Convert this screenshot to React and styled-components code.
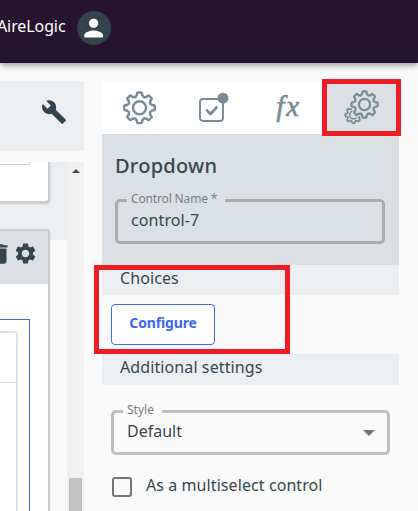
import React from 'react';
import styled, { createGlobalStyle } from 'styled-components';

const GlobalStyle = createGlobalStyle`
  * { box-sizing: border-box; }
  body { margin: 0; overflow: hidden; background: #fafafa; }
  svg { flex: none; display: block; }
`;

const Page = styled.div`
  position: relative;
  display: flex;
  flex-direction: column;
  width: 418px;
  height: 511px;
  overflow: hidden;
  background: #fafafa;
  color: #37474f;
  font-family: 'Noto Sans', sans-serif;
`;

const Label = styled.span`
  display: block;
  white-space: nowrap;
  font-size: ${(p) => p.$size || 16}px;
  line-height: ${(p) => p.$line || 20}px;
  letter-spacing: ${(p) => p.$track || 0}px;
  font-weight: ${(p) => p.$weight || 400};
  color: ${(p) => p.$color || 'inherit'};
`;

const Header = styled.header`
  flex: none;
  display: flex;
  align-items: flex-start;
  height: 63px;
  background: #26142e;
  box-shadow: 0 2px 4px -1px rgba(0, 0, 0, 0.2), 0 4px 5px rgba(0, 0, 0, 0.14), 0 1px 10px rgba(0, 0, 0, 0.12);
  z-index: 1;
`;

const UserName = styled.div`
  width: 77px;
  padding: 16px 0 0;
  margin-left: -3px;
`;

const Avatar = styled.div`
  width: 34px;
  height: 34px;
  margin: 11px 0 0 3px;
  border-radius: 50%;
  background: #33444f;
`;

const Body = styled.main`
  flex: 1;
  display: flex;
  gap: 18px;
  padding-top: 18px;
  min-height: 0;
`;

const Canvas = styled.section`
  flex: none;
  display: flex;
  flex-direction: column;
  gap: 11px;
  width: 84px;
`;

const Toolbar = styled.div`
  flex: none;
  display: flex;
  justify-content: flex-end;
  height: 70px;
  padding: 18px 17px 0 0;
  background: #ebeff2;
`;

const ScrollArea = styled.div`
  flex: 1;
  display: flex;
  min-height: 0;
`;

const Cards = styled.div`
  width: 67px;
  overflow: hidden;
  background: linear-gradient(#ebeff2 78px, #fafafa 78px);
`;

const Card = styled.div`
  width: 50px;
  border: 2px solid #cacccd;
  border-left: 0;
  box-shadow: 0 1px 2px rgba(0, 0, 0, 0.15);
  background: #fff;
`;

const UpperCard = styled(Card)`
  height: 41px;
  border-top: 0;
  border-radius: 0 0 4px 0;
`;

const UpperInner = styled.div`
  width: 30px;
  height: 3px;
  border: solid #cfd0d1;
  border-width: 0 1px 1px 0;
`;

const LowerCard = styled(Card)`
  height: 300px;
  margin-top: 26px;
  border-radius: 0 4px 0 0;
`;

const CardHeader = styled.div`
  display: flex;
  align-items: flex-start;
  justify-content: flex-end;
  gap: 0;
  height: 53px;
  padding: 10px 10px 0 0;
  background: #dbe0e4;
`;

const Selection = styled.div`
  width: 30px;
  height: 260px;
  margin-top: 35px;
  padding-top: 11px;
  border: solid #3f66ef;
  border-width: 1px 1px 0 0;
`;

const SelectionInner = styled.div`
  width: 18px;
  height: 240px;
  border: 2px solid #dce1e4;
  border-left: 0;
  border-radius: 0 4px 0 0;
`;

const InnerRow = styled.div`
  height: 50px;
  border-bottom: 1px solid #dadddf;
`;

const Scrollbar = styled.div`
  display: flex;
  flex-direction: column;
  justify-content: space-between;
  align-items: center;
  width: 17px;
  padding-top: 7px;
  background: #f1f1f1;
`;

const ScrollUp = styled.div`
  border: solid transparent;
  border-width: 0 4px 4px;
  border-bottom-color: #4c4c4c;
`;

const Thumb = styled.div`
  width: 13px;
  height: 33px;
  background: #c1c1c1;
`;

const Inspector = styled.section`
  flex: none;
  width: 297px;
`;

const Tabs = styled.nav`
  display: grid;
  grid-template-columns: repeat(4, 1fr);
  height: 53px;
  background: #fff;
  color: #788b96;
`;

const Tab = styled.div`
  display: flex;
  align-items: center;
  justify-content: center;
  background: ${(p) => (p.$active ? '#dbe0e4' : '#fff')};
`;

const Formula = styled.span`
  font: italic 29px/32px 'Liberation Serif', serif;
  letter-spacing: 2px;
  -webkit-text-stroke: 0.6px #788b96;
  margin: -3px 0 0 2px;
`;

const Summary = styled.div`
  height: 131px;
  padding: 20px 14px 0 13px;
  background: #dbe0e4;
`;

const SectionTitle = styled.div`
  height: ${(p) => p.$height}px;
  padding: 3px 0 0 18px;
  background: #ebeff2;
`;

const Field = styled.fieldset`
  display: flex;
  justify-content: space-between;
  height: 53px;
  min-width: 0;
  margin: ${(p) => p.$margin};
  padding: 1px 13px 0;
  border: 3px solid ${(p) => p.$line};
  border-radius: 5px;
`;

const Legend = styled.legend`
  width: ${(p) => p.$width}px;
  height: 18px;
  padding: 0 0 0 4px;
  margin-left: -4px;
`;

const ButtonRow = styled.div`
  height: 59px;
  padding: 9px;
`;

const ConfigureButton = styled.button`
  display: flex;
  justify-content: center;
  width: 104px;
  height: 41px;
  padding: 8px 0 0;
  border: 1px solid #3f66f5;
  border-radius: 4px;
  background: #fff;
  color: #3f66f5;
  font-family: inherit;
`;

const Caret = styled.div`
  height: 0;
  margin: 9px -1px 0 0;
  border: solid transparent;
  border-width: 6px 6px 0;
  border-top-color: #747474;
`;

const CheckRow = styled.label`
  display: flex;
  gap: 14px;
  padding: 20px 0 0 10px;
`;

const Checkbox = styled.span`
  width: 20px;
  height: 20px;
  margin-top: 2px;
  border: 2px solid #757575;
  border-radius: 3px;
`;

const Highlight = styled.div`
  position: absolute;
  z-index: 2;
  left: ${(p) => p.$x}px;
  top: ${(p) => p.$y}px;
  width: ${(p) => p.$w}px;
  height: ${(p) => p.$h}px;
  border: 5px solid #ee1c24;
`;

// Closed outline of an eight-toothed cog with rounded teeth and valleys.
function cogPath(cx, cy, radius) {
  const pt = (deg, r) => {
    const a = (deg * Math.PI) / 180;
    return `${(cx + Math.cos(a) * r * radius).toFixed(2)} ${(cy + Math.sin(a) * r * radius).toFixed(2)}`;
  };
  let d = `M${pt(-6, 1)}`;
  for (let i = 0; i < 8; i += 1) {
    const a = i * 45;
    d += `L${pt(a + 6, 1)}Q${pt(a + 10, 1)} ${pt(a + 10.5, 0.92)}`;
    d += `Q${pt(a + 11, 0.8)} ${pt(a + 15, 0.82)}`;
    d += `Q${pt(a + 22.5, 0.66)} ${pt(a + 30, 0.82)}`;
    d += `Q${pt(a + 34, 0.8)} ${pt(a + 34.5, 0.92)}Q${pt(a + 35, 1)} ${pt(a + 39, 1)}`;
  }
  return `${d}Z`;
}

const stroke = { fill: 'none', stroke: 'currentColor', strokeWidth: 2.4, strokeLinejoin: 'round', strokeLinecap: 'round' };

const CogIcon = () => (
  <svg width="34" height="34" viewBox="0 0 34 34" {...stroke}>
    <path d={cogPath(17.5, 16.8, 15.4)} />
    <circle cx="17.5" cy="16.8" r="6.5" />
  </svg>
);

const ValidationIcon = () => (
  <svg width="32" height="32" viewBox="0 0 32 32" {...stroke} strokeWidth="1.9">
    <rect x="3" y="7" width="23" height="22" rx="3" />
    <path d="M10 18.5l3.5 3.5 6-6.5" strokeWidth="2.7" />
    <circle cx="26" cy="6.2" r="5.5" fill="currentColor" stroke="none" />
  </svg>
);

const CogsIcon = () => (
  <svg width="36" height="36" viewBox="0 0 36 36" {...stroke}>
    <path d={cogPath(9.5, 25, 8.3)} strokeWidth="1.6" />
    <circle cx="9.5" cy="25" r="3.9" strokeWidth="1.6" />
    <path d={cogPath(20.5, 14.5, 15)} fill="#dbe0e4" stroke="#dbe0e4" />
    <path d={cogPath(20.5, 14.5, 13.2)} strokeWidth="2.2" />
    <circle cx="20.5" cy="14.5" r="5.6" strokeWidth="2.2" />
  </svg>
);

const MaterialIcon = ({ size, color, d }) => (
  <svg width={size} height={size} viewBox="0 0 24 24" fill={color}>
    <path d={d} />
  </svg>
);

const WRENCH = 'M22.7 19l-9.1-9.1c.9-2.3.4-5-1.5-6.9-2-2-5-2.4-7.4-1.3L9 6 6 9 1.6 4.7C.4 7.1.9 10.1 2.9 12.1c1.9 1.9 4.6 2.4 6.9 1.5l9.1 9.1c.4.4 1 .4 1.4 0l2.3-2.3c.5-.4.5-1.1.1-1.4z';
const PERSON = 'M12 12c2.21 0 4-1.79 4-4s-1.79-4-4-4-4 1.79-4 4 1.79 4 4 4zm0 2c-2.67 0-8 1.34-8 4v2h16v-2c0-2.66-5.33-4-8-4z';
const TRASH = 'M6 19c0 1.1.9 2 2 2h8c1.1 0 2-.9 2-2V7H6v12zM19 4h-3.5l-1-1h-5l-1 1H5v2h14V4z';
const SETTINGS = 'M19.14 12.94c.04-.3.06-.61.06-.94 0-.32-.02-.64-.07-.94l2.03-1.58c.18-.14.23-.41.12-.61l-1.92-3.32c-.12-.22-.37-.29-.59-.22l-2.39.96c-.5-.38-1.03-.7-1.62-.94l-.36-2.54c-.04-.24-.24-.41-.48-.41h-3.84c-.24 0-.43.17-.47.41l-.36 2.54c-.59.24-1.13.57-1.62.94l-2.39-.96c-.22-.08-.47 0-.59.22L2.74 8.87c-.12.21-.08.47.12.61l2.03 1.58c-.05.3-.09.63-.09.94s.02.64.07.94l-2.03 1.58c-.18.14-.23.41-.12.61l1.92 3.32c.12.22.37.29.59.22l2.39-.96c.5.38 1.03.7 1.62.94l.36 2.54c.05.24.24.41.48.41h3.84c.24 0 .44-.17.47-.41l.36-2.54c.59-.24 1.13-.56 1.62-.94l2.39.96c.22.08.47 0 .59-.22l1.92-3.32c.12-.22.07-.47-.12-.61l-2.01-1.58zM12 15.6c-1.98 0-3.6-1.62-3.6-3.6s1.62-3.6 3.6-3.6 3.6 1.62 3.6 3.6-1.62 3.6-3.6 3.6z';

const AvatarIcon = () => (
  <svg width="34" height="34" viewBox="0 0 34 34" fill="#fff">
    <path d={PERSON} transform="translate(2.6 3) scale(1.17)" />
  </svg>
);

export default function App() {
  return (
    <Page>
      <GlobalStyle />
      <Header>
        <UserName><Label $color="#fff" $track={-0.1}>AireLogic</Label></UserName>
        <Avatar><AvatarIcon /></Avatar>
      </Header>
      <Body>
        <Canvas>
          <Toolbar><MaterialIcon size={26} color="#33444f" d={WRENCH} /></Toolbar>
          <ScrollArea>
            <Cards>
              <UpperCard><UpperInner /></UpperCard>
              <LowerCard>
                <CardHeader>
                  <MaterialIcon size={26} color="#33444f" d={TRASH} />
                  <MaterialIcon size={25} color="#33444f" d={SETTINGS} />
                </CardHeader>
                <Selection><SelectionInner><InnerRow /></SelectionInner></Selection>
              </LowerCard>
            </Cards>
            <Scrollbar><ScrollUp /><Thumb /></Scrollbar>
          </ScrollArea>
        </Canvas>
        <Inspector>
          <Tabs>
            <Tab><CogIcon /></Tab>
            <Tab><ValidationIcon /></Tab>
            <Tab><Formula>fx</Formula></Tab>
            <Tab $active><CogsIcon /></Tab>
          </Tabs>
          <Summary>
            <Label $size={20} $line={24} $weight={500} $track={0.25}>Dropdown</Label>
            <Field $line="#a9adaf" $margin="13px 0 0">
              <Legend $width={98}><Label $size={12} $line={16} $color="#788187" $track={-0.15}>Control Name *</Label></Legend>
              <Label $track={0.1}>control-7</Label>
            </Field>
          </Summary>
          <SectionTitle $height={30}><Label $track={0.1}>Choices</Label></SectionTitle>
          <ButtonRow>
            <ConfigureButton><Label $size={14} $weight={700} $track={-0.15}>Configure</Label></ConfigureButton>
          </ButtonRow>
          <SectionTitle $height={31}><Label $track={0.1}>Additional settings</Label></SectionTitle>
          <Field $line="#bfbfbf" $margin="17px 9px 0">
            <Legend $width={39}><Label $size={12} $line={16} $color="#7c7c7c">Style</Label></Legend>
            <Label>Default</Label>
            <Caret />
          </Field>
          <CheckRow><Checkbox /><Label $track={0.08}>As a multiselect control</Label></CheckRow>
        </Inspector>
      </Body>
      <Highlight $x={322} $y={79} $w={79} $h={57} />
      <Highlight $x={94} $y={265} $w={196} $h={89} />
    </Page>
  );
}
